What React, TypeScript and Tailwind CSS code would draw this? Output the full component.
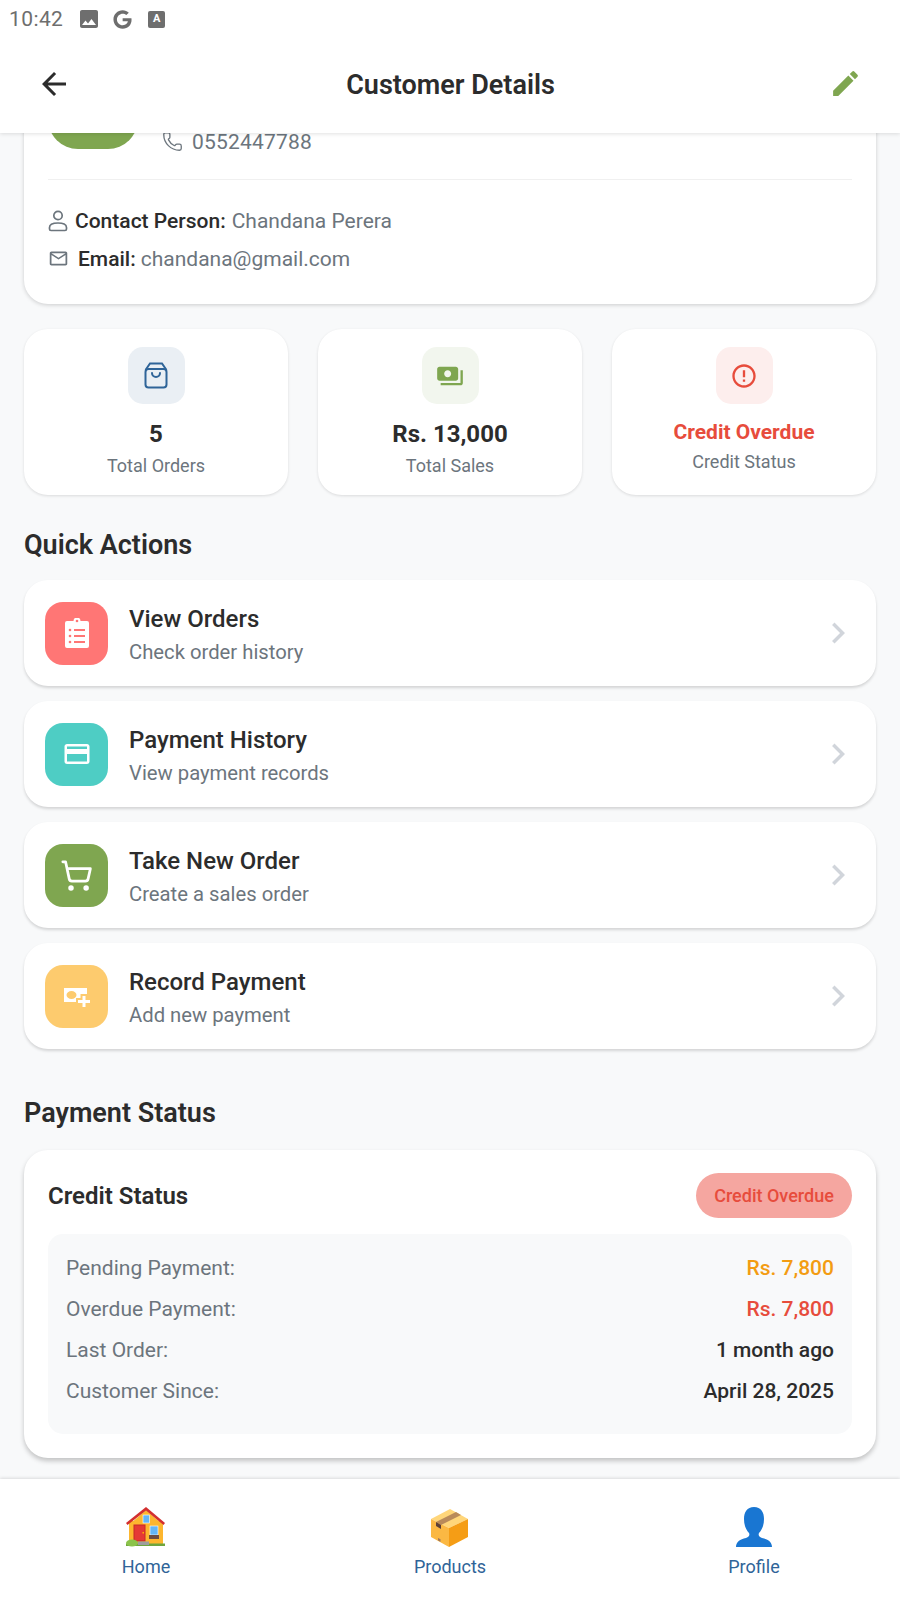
import React from "react";
import { MdArrowBack, MdEdit, MdMailOutline, MdPayments, MdErrorOutline, MdOutlineCreditCard, MdChevronRight, MdPhoto } from "react-icons/md";
import { FaGoogle } from "react-icons/fa";
import { ShoppingCart, Phone } from "lucide-react";

function PersonIcon() {
  return (
    <svg width="20" height="22" viewBox="0 0 20 22" fill="none" stroke="#6c757d" strokeWidth="1.7" className="-mt-[3px]">
      <circle cx="10" cy="5.5" r="4.2" />
      <path d="M1.5 17.5c0-3 3.5-4.5 8.5-4.5s8.500 1.500 8.500 4.500v1.500a1.500 1.500 0 0 1-1.500 1.500h-14a1.500 1.500 0 0 1-1.500-1.500z" />
    </svg>
  );
}

function BagIcon() {
  return (
    <svg width="24" height="27" viewBox="0 0 24 27" fill="none" stroke="#2f6498" strokeWidth="2">
      <rect x="1.500" y="7" width="21" height="18.500" rx="3" />
      <path d="M1.500 8 6 1.500h12L22.500 8" />
      <path d="M8 11a4 4 0 0 0 8 0" strokeLinecap="round" />
    </svg>
  );
}

function ClipIcon() {
  return (
    <svg width="24" height="30" viewBox="0 0 24 30">
      <path fill="#fff" d="M2 3h6.500a3.500 3.500 0 0 1 7 0H22a2 2 0 0 1 2 2v23a2 2 0 0 1-2 2H2a2 2 0 0 1-2-2V5a2 2 0 0 1 2-2z" />
      <circle cx="12" cy="3" r="1.300" fill="#ff7675" />
      <g fill="#ff7675">
        <circle cx="5" cy="12" r="1.300" /><circle cx="5" cy="18" r="1.300" /><circle cx="5" cy="24" r="1.300" />
        <rect x="9" y="11" width="11" height="2" /><rect x="9" y="17" width="11" height="2" /><rect x="9" y="23" width="11" height="2" />
      </g>
    </svg>
  );
}

function CashPlusIcon() {
  return (
    <svg width="26" height="19" viewBox="0 0 26 19" className="mt-[2px]">
      <path fill="#fff" fillRule="evenodd" d="M0 0H23V6H16.500V10H12V14H0ZM7.500 3a5 4 0 1 0 0 8 5 4 0 0 0 0-8z" />
      <path fill="#fff" d="M18.500 8h3v4H26v3h-4.500v4h-3v-4H14v-3h4.500z" />
    </svg>
  );
}

function HouseEmoji() {
  return (
    <svg width="40" height="40" viewBox="0 0 40 40">
      <rect x="3" y="14" width="34" height="23" fill="#fdb62f" />
      <path d="M20 3 4 17h32z" fill="#fdb62f" />
      <path d="M20 0 0 16l1.500 2L20 3.500 37.500 18l1.500-2z" fill="#d32f2f" />
      <rect x="17" y="8" width="6.500" height="8" fill="#64b5f6" stroke="#fff" strokeWidth="0.6" />
      <rect x="8" y="18" width="11" height="16" fill="#e53935" stroke="#c62828" />
      <rect x="16.500" y="25" width="1.500" height="1.500" fill="#ffb300" />
      <rect x="24" y="19" width="8" height="9" fill="#64b5f6" stroke="#fff" strokeWidth="0.6" />
      <rect x="23" y="28" width="10" height="4" fill="#6d4c41" />
      <rect x="0" y="36.500" width="39" height="2.500" fill="#6fa53e" />
      <ellipse cx="6" cy="36" rx="6" ry="3.500" fill="#8bc34a" />
      <rect x="12" y="34.500" width="11" height="3.500" fill="#9e9e9e" />
    </svg>
  );
}

function BoxEmoji() {
  return (
    <svg width="37" height="38" viewBox="0 0 37 38" className="-ml-[2px]">
      <path d="M0 10 19 0l18 10-19 9z" fill="#ffd67a" />
      <path d="M0 10l18 9v19L0 28z" fill="#fbb843" />
      <path d="M18 19l19-9v18L18 38z" fill="#f59d15" />
      <path d="M5 13 25 3l5 3-20 10z" fill="#b98a5a" />
      <path d="M5 13l5 3v4l-5-3z" fill="#5d4037" />
      <path d="M7 29l2.500 1.200v2.500L7 31.500z" fill="#a1785a" />
    </svg>
  );
}

function ProfileEmoji() {
  return (
    <svg width="40" height="40" viewBox="0 0 40 40">
      <path d="M20 0c7 0 10 5 10 12 0 6-2 11-5 14-1 2 0 4 3 5 6 1 10 4 10 9H2c0-5 4-8 10-9 3-1 4-3 3-5-3-3-5-8-5-14C10 5 13 0 20 0z" fill="#1976d2" />
    </svg>
  );
}

function Stat({ bg, icon, value, valueCls, label, labelCls }: { bg: string; icon: React.ReactNode; value: string; valueCls: string; label: string; labelCls: string }) {
  return (
    <div className="flex-1 h-[166px] bg-white rounded-[24px] shadow-[0_1px_3px_rgba(0,0,0,0.12)] flex flex-col items-center pt-[18px]">
      <div className={`w-[57px] h-[57px] rounded-[15px] flex items-center justify-center ${bg}`}>{icon}</div>
      <div className={valueCls}>{value}</div>
      <div className={labelCls}>{label}</div>
    </div>
  );
}

function ActionRow({ bg, icon, title, sub }: { bg: string; icon: React.ReactNode; title: string; sub: string }) {
  return (
    <div className="h-[106px] bg-white rounded-[24px] shadow-[0_2px_3px_rgba(0,0,0,0.15)] flex items-center pl-[21px] pr-[24px]">
      <div className={`w-[63px] h-[63px] rounded-[18px] flex items-center justify-center shrink-0 ${bg}`}>{icon}</div>
      <div className="ml-[21px] flex-1 mt-[6px]">
        <div className="text-[24px] leading-[33px] font-medium text-[#2c2c2c]">{title}</div>
        <div className="text-[20.250px] leading-[33px] text-[#6c757d]">{sub}</div>
      </div>
      <MdChevronRight size={42} color="#d1d5db" className="mr-[-7px]" />
    </div>
  );
}

function InfoRow({ label, value, cls }: { label: string; value: string; cls: string }) {
  return (
    <div className="h-[41px] flex items-center justify-between">
      <span className="text-[21px] text-[#6c757d]">{label}</span>
      <span className={`text-[21px] font-medium ${cls}`}>{value}</span>
    </div>
  );
}

function NavItem({ icon, label }: { icon: React.ReactNode; label: string }) {
  return (
    <div className="flex flex-col items-center w-[100px]">
      <div className="h-[42px] flex items-end">{icon}</div>
      <div className="mt-[7px] text-[18px] leading-[26px] text-[#2f6498]">{label}</div>
    </div>
  );
}

export default function App() {
  return (
    <div className="w-[900px] h-[1600px] flex flex-col overflow-hidden bg-[#f8f9fa] font-['Roboto',sans-serif]">
      <header className="relative z-10 h-[133px] shrink-0 bg-white shadow-[0_1px_4px_rgba(0,0,0,0.12)] flex flex-col">
        <div className="h-[38px] flex items-center pl-[9px] text-[#6e6e6e]">
          <span className="mt-[2px] text-[21px] tracking-[0.4px]">10:42</span>
          <MdPhoto size={24} className="ml-[14px]" />
          <FaGoogle size={19} className="ml-[12px]" />
          <span className="ml-[16px] w-[17px] h-[17px] rounded-[2px] bg-[#6e6e6e] text-white text-[11px] leading-[15px] font-bold text-center">A</span>
        </div>
        <div className="flex-1 flex items-center justify-between pl-[36px] pr-[38px] pb-[4px]">
          <MdArrowBack size={36} color="#2c2c2c" />
          <h1 className="mt-[4px] text-[27px] font-semibold text-[#2c2c2c]">Customer Details</h1>
          <MdEdit size={33} color="#7fa650" />
        </div>
      </header>

      <main className="flex-1 overflow-hidden px-[24px]">
        <section className="-mt-[40px] h-[211px] bg-white rounded-[24px] shadow-[0_1px_4px_rgba(0,0,0,0.18)] px-[24px] flex flex-col">
          <div className="h-[60px] flex items-start">
            <div className="w-[90px] h-[56px] rounded-b-[30px] bg-[#7fa650]" />
            <div className="ml-[24px] mt-[38px] flex items-center text-[#6c757d] text-[21px] leading-[16px] tracking-[0.2px]">
              <Phone size={21} strokeWidth={1.500} />
              <span className="ml-[9px]">0552447788</span>
            </div>
          </div>
          <div className="mt-[26px] border-t border-[#f0f0f0]" />
          <div className="mt-[28px] flex items-center h-[28px] text-[21px]">
            <PersonIcon />
            <span className="ml-[7px] font-medium text-[#2c2c2c]">Contact Person:</span>
            <span className="ml-[6px] text-[#6c757d]">Chandana Perera</span>
          </div>
          <div className="mt-[10px] flex items-center h-[28px] text-[21px]">
            <MdMailOutline size={21} color="#6c757d" className="-mt-[4px]" />
            <span className="ml-[9px] font-medium text-[#2c2c2c]">Email:</span>
            <span className="ml-[5px] text-[#6c757d]">chandana@gmail.com</span>
          </div>
        </section>

        <div className="mt-[25px] flex gap-[30px]">
          <Stat bg="bg-[#eaeff4]" icon={<BagIcon />} value="5" valueCls="mt-[13px] text-[24px] leading-[34px] font-bold text-[#2c2c2c]" label="Total Orders" labelCls="mt-[2px] text-[18px] leading-[26px] text-[#6c757d]" />
          <Stat bg="bg-[#f2f6ee]" icon={<MdPayments size={28} color="#7fa650" />} value="Rs. 13,000" valueCls="mt-[13px] text-[24px] leading-[34px] font-bold text-[#2c2c2c]" label="Total Sales" labelCls="mt-[2px] text-[18px] leading-[26px] text-[#6c757d]" />
          <Stat bg="bg-[#fdeeed]" icon={<MdErrorOutline size={28} color="#e74c3c" />} value="Credit Overdue" valueCls="mt-[13px] text-[21px] leading-[30px] font-bold text-[#e74c3c]" label="Credit Status" labelCls="mt-[2px] text-[18px] leading-[26px] text-[#6c757d]" />
        </div>

        <h2 className="mt-[31px] text-[27px] leading-[38px] font-semibold text-[#2c2c2c]">Quick Actions</h2>
        <div className="mt-[16px] flex flex-col gap-[15px]">
          <ActionRow bg="bg-[#ff7675]" icon={<ClipIcon />} title="View Orders" sub="Check order history" />
          <ActionRow bg="bg-[#4ecdc4]" icon={<MdOutlineCreditCard size={30} color="#fff" />} title="Payment History" sub="View payment records" />
          <ActionRow bg="bg-[#7fa650]" icon={<ShoppingCart size={33} color="#fff" strokeWidth={2} />} title="Take New Order" sub="Create a sales order" />
          <ActionRow bg="bg-[#fdcb6e]" icon={<CashPlusIcon />} title="Record Payment" sub="Add new payment" />
        </div>

        <h2 className="mt-[45px] text-[27px] leading-[38px] font-semibold text-[#2c2c2c]">Payment Status</h2>
        <section className="mt-[18px] h-[308px] bg-white rounded-[24px] shadow-[0_3px_5px_rgba(0,0,0,0.22)] px-[24px] pt-[23px]">
          <div className="flex items-center justify-between h-[45px]">
            <span className="text-[24px] font-semibold text-[#2c2c2c]">Credit Status</span>
            <span className="w-[156px] h-[45px] rounded-full bg-[#f5a6a0] text-[#e74c3c] text-[18px] font-medium flex items-center justify-center">Credit Overdue</span>
          </div>
          <div className="mt-[16px] h-[200px] rounded-[15px] bg-[#f8f9fa] px-[18px] pt-[14px]">
            <InfoRow label="Pending Payment:" value="Rs. 7,800" cls="text-[#f39c12]" />
            <InfoRow label="Overdue Payment:" value="Rs. 7,800" cls="text-[#e74c3c]" />
            <InfoRow label="Last Order:" value="1 month ago" cls="text-[#2c2c2c]" />
            <InfoRow label="Customer Since:" value="April 28, 2025" cls="text-[#2c2c2c]" />
          </div>
        </section>
      </main>

      <nav className="h-[121px] shrink-0 bg-white shadow-[0_-1px_3px_rgba(0,0,0,0.12)] flex justify-between items-start pt-[26px] px-[96px]">
        <NavItem icon={<HouseEmoji />} label="Home" />
        <NavItem icon={<BoxEmoji />} label="Products" />
        <NavItem icon={<ProfileEmoji />} label="Profile" />
      </nav>
    </div>
  );
}
